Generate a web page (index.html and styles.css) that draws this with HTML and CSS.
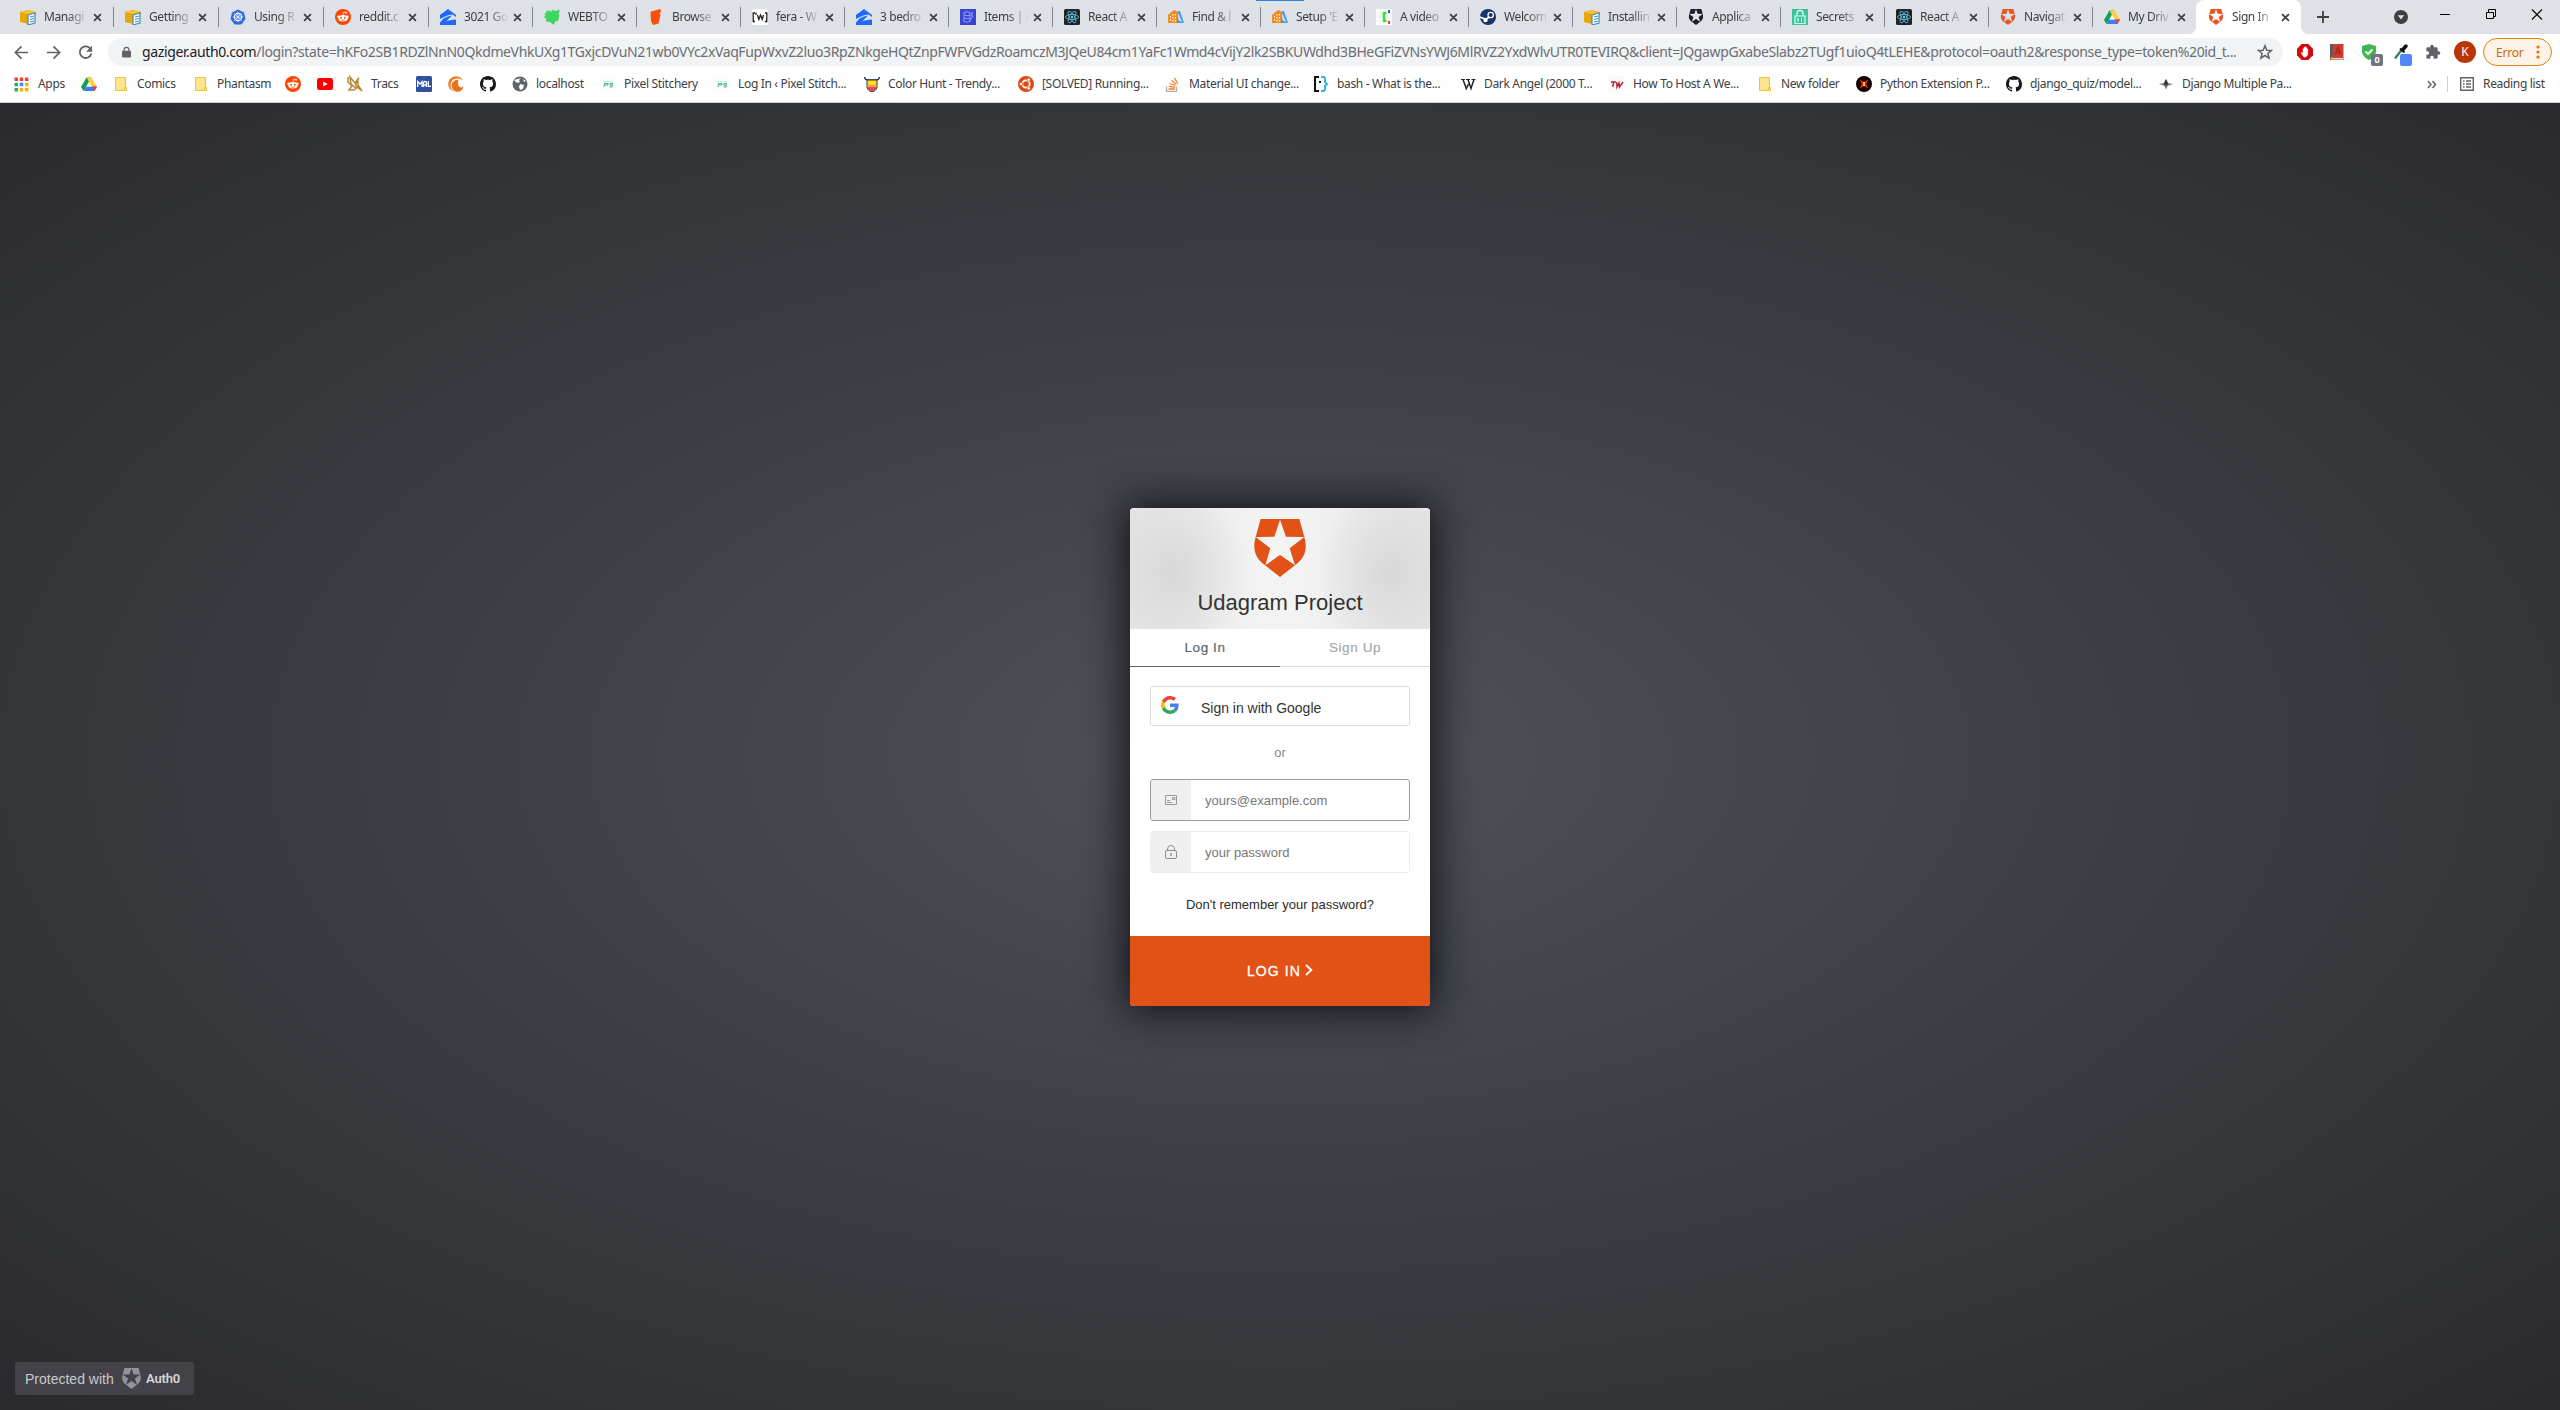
FILE: index.html
```html
<!DOCTYPE html>
<html lang="en">
<head>
<meta charset="utf-8">
<title>Sign In with Auth0</title>
<link rel="stylesheet" href="styles.css">
</head>
<body>
<svg class="defs" aria-hidden="true">
  <symbol id="x" viewBox="0 0 10 10"><path d="M1.2 1.2l7.6 7.6M8.8 1.2L1.2 8.8" stroke="#3c4043" stroke-width="1.9"/></symbol>
  <symbol id="aws" viewBox="0 0 16 16"><path d="M0 3l8-2 8 2v3H8v9L0 13z" fill="#e8a80c"/><path d="M0 3l8-2 7 2-7 2z" fill="#f6c531"/><path d="M8 6l7-2v10l-7 2z" fill="#fff" stroke="#3b8fc4" stroke-width="1.2"/><path d="M10 8l4-1M10 10.500l4-1M10 13l4-1" stroke="#3b8fc4"/></symbol>
  <symbol id="kube" viewBox="0 0 16 16"><path d="M8 .5l6 3 1.500 6.500-4 5.500h-7L.5 10 2 3.500z" fill="#326ce5"/><circle cx="8" cy="8" r="3.600" fill="none" stroke="#fff" stroke-width="1.200"/><path d="M8 2.800v10.400M2.800 8h10.400M4.300 4.300l7.400 7.400M11.700 4.300l-7.400 7.400" stroke="#fff" stroke-width=".7"/></symbol>
  <symbol id="reddit" viewBox="0 0 16 16"><circle cx="8" cy="8" r="8" fill="#ff4500"/><ellipse cx="8" cy="9.300" rx="4.700" ry="3.300" fill="#fff"/><circle cx="3.500" cy="7.800" r="1.200" fill="#fff"/><circle cx="12.500" cy="7.800" r="1.200" fill="#fff"/><circle cx="11" cy="3.800" r="1" fill="#fff"/><path d="M8 6l.7-3 2.300.7M6 10.700q2 1.300 4 0" fill="none" stroke="#fff" stroke-width=".7"/><circle cx="6.200" cy="8.700" r=".9" fill="#ff4500"/><circle cx="9.800" cy="8.700" r=".9" fill="#ff4500"/><path d="M6 10.700q2 1.200 4 0" fill="none" stroke="#ff4500" stroke-width=".7"/></symbol>
  <symbol id="zillow" viewBox="0 0 16 16"><path d="M8 0l8 6v2L12.500 5.500Q8 5.500 3 8.500L0 10V6z" fill="#1f69ff"/><path d="M3.500 9.500Q8 6.800 12 6.500L6.500 12q5-1.500 9.500-1.500V16H0v-2.500z" fill="#1f69ff"/></symbol>
  <symbol id="webtoon" viewBox="0 0 16 16"><path d="M2 2l4-.5L7 3l2-2.500L10.500 2 16 1l-1.500 4 1 1L14 12l-3 .5L10 16l-4-3-4-.5.5-3L0 8.500 1.500 6 0 4.500l2.500-.3z" fill="#3ed65c"/></symbol>
  <symbol id="tapas" viewBox="0 0 16 16"><path d="M3 2.500L12.500 0l.5 3-1.500 1 1 2-2 8.500L5 16 3 12l-.5-8z" fill="#fa5109"/></symbol>
  <symbol id="fera" viewBox="0 0 16 16"><rect width="16" height="16" rx="2" fill="#fff"/><path d="M3 4H1.200v8.500H3M13 4h1.800v8.500H13M4 3.500V6M5.500 6l1.300 4.500L8.500 6l1.700 4.500L11.500 6" fill="none" stroke="#222" stroke-width="1.300"/></symbol>
  <symbol id="dynamo" viewBox="0 0 16 16"><path d="M0 0h16v16H0z" fill="#3a45d2"/><path d="M4 3.500q3-1.500 6 0v9q-3 1.500-6 0zM4 6q3 1.500 6 0M4 9q3 1.500 6 0M11 4.500l1.500-1L11.500 7H13l-3 4.500" fill="none" stroke="#a8b4ff" stroke-width=".8"/></symbol>
  <symbol id="react" viewBox="0 0 16 16"><rect width="16" height="16" rx="1.500" fill="#20232a"/><g fill="none" stroke="#61c5df" stroke-width=".8"><ellipse cx="8" cy="8" rx="6.500" ry="2.500"/><ellipse cx="8" cy="8" rx="6.500" ry="2.500" transform="rotate(60 8 8)"/><ellipse cx="8" cy="8" rx="6.500" ry="2.500" transform="rotate(120 8 8)"/></g><circle cx="8" cy="8" r="1.300" fill="#61c5df"/></symbol>
  <symbol id="expo" viewBox="0 0 16 16"><path d="M0 6l6-5 3 1.500V14H0z" fill="#f58a1f"/><path d="M9 2.500l3-.5 4 12H9z" fill="#4b9ce2"/><path d="M9.500 3L14 13l-3.500-2z" fill="#d7ebfb"/><path d="M2.500 7v6M5 5v8M7.500 5v8" stroke="#fff" stroke-width="1.200" stroke-dasharray="1.500 1.500"/></symbol>
  <symbol id="vid" viewBox="0 0 16 16"><path d="M0 0h16v16H0z" fill="#fff"/><path d="M0 4h16M0 8h16M0 12h16M4 0v16" stroke="#ddd" stroke-width=".5"/><path d="M10.500 4H8v8h2.500" fill="none" stroke="#35e33b" stroke-width="2.600"/><path d="M12 1h2v3h-2z" fill="#3650ee"/><path d="M12 12h2v3h-2z" fill="#ed3b32"/></symbol>
  <symbol id="steam" viewBox="0 0 16 16"><circle cx="8" cy="8" r="8" fill="#143565"/><path d="M0 8l6 2.500L9 8" fill="none" stroke="#fff" stroke-width="1.700"/><circle cx="10.700" cy="6" r="2.700" fill="#143565" stroke="#fff" stroke-width="1.300"/><circle cx="5.500" cy="11" r="2.200" fill="#fff"/></symbol>
  <symbol id="auth" viewBox="0 0 156 174"><path fill="currentColor" fill-rule="evenodd" d="M20 0H136L151 54C163 95 148 121 123 139L78 174L33 139C8 121 -7 95 5 54ZM78 2L61 53L5 54L49 88L34 139L78 108L123 139L107 88L151 54L96 53Z"/></symbol>
  <symbol id="secret" viewBox="0 0 16 16"><path d="M0 0h16v16H0z" fill="#3ec49c"/><path d="M5 7V4.500q0-3 3-3t3 3V7" fill="none" stroke="#d8fff2" stroke-width="1.300"/><path d="M3 7h10v7.500H3z" fill="none" stroke="#d8fff2" stroke-width="1.200"/><path d="M6 9v4M9.500 9v4M5 10h2" stroke="#d8fff2"/></symbol>
  <symbol id="drive" viewBox="0 0 16 16"><path d="M5.500 1.500h5L5 11l-2.500 4L0 11z" fill="#0f9d58"/><path d="M5.500 1.500h5L16 11h-5z" fill="#ffcf3f"/><path d="M5 10.500h11L13.500 15h-11z" fill="#3c7df0"/><path d="M11 10.500h5L13.500 15z" fill="#e84335"/><path d="M8 6l2.700 4.500H5.300z" fill="#fff"/></symbol>
  <symbol id="folder" viewBox="0 0 16 16"><path d="M2.500 1.500h10v10h1v3h-11z" fill="#fce58a" stroke="#e8c635"/><path d="M11.500 14v-2.500h2" fill="none" stroke="#e8c635"/></symbol>
  <symbol id="github" viewBox="0 0 16 16"><path fill="#191717" d="M8 0C3.580 0 0 3.580 0 8c0 3.540 2.290 6.530 5.470 7.590.4.070.550-.170.550-.380 0-.190-.010-.820-.010-1.490-2.010.370-2.530-.490-2.690-.940-.090-.230-.480-.940-.820-1.130-.280-.150-.680-.520-.010-.530.630-.010 1.080.580 1.230.820.720 1.210 1.870.870 2.330.660.070-.520.280-.870.510-1.070-1.780-.2-3.640-.890-3.640-3.950 0-.870.310-1.590.820-2.150-.080-.2-.360-1.020.080-2.120 0 0 .670-.210 2.200.820.640-.180 1.320-.270 2-.270s1.360.090 2 .270c1.530-1.040 2.200-.820 2.200-.820.440 1.100.160 1.920.080 2.120.510.560.820 1.270.820 2.150 0 3.070-1.870 3.750-3.650 3.950.290.250.540.730.540 1.480 0 1.070-.010 1.930-.010 2.200 0 .210.150.460.550.380A8.010 8.010 0 0 0 16 8c0-4.420-3.580-8-8-8z"/></symbol>
  <symbol id="ps" viewBox="0 0 16 16"><path d="M0 0h16v16H0z" fill="#fcfefd"/><path d="M4 11l.7-3.500H8L7.500 9H5M13 7.500h-2.500L10 9h2.500l-.5 2H9.500" fill="none" stroke="#4bb98f" stroke-width="1.200"/><path d="M3 5.500h10" stroke="#c9efd2" stroke-width="1"/></symbol>
</svg>

<div class="browser">
  <div class="tabstrip">
    <span class="progress"></span>
    <div class="tab w"><svg class="fav"><use href="#aws"/></svg><span>Managi</span><svg class="close"><use href="#x"/></svg></div>
    <div class="tab w"><svg class="fav"><use href="#aws"/></svg><span>Getting</span><svg class="close"><use href="#x"/></svg></div>
    <div class="tab w"><svg class="fav"><use href="#kube"/></svg><span>Using R</span><svg class="close"><use href="#x"/></svg></div>
    <div class="tab w"><svg class="fav"><use href="#reddit"/></svg><span>reddit.c</span><svg class="close"><use href="#x"/></svg></div>
    <div class="tab"><svg class="fav"><use href="#zillow"/></svg><span>3021 Go</span><svg class="close"><use href="#x"/></svg></div>
    <div class="tab"><svg class="fav"><use href="#webtoon"/></svg><span>WEBTO</span><svg class="close"><use href="#x"/></svg></div>
    <div class="tab"><svg class="fav"><use href="#tapas"/></svg><span>Browse</span><svg class="close"><use href="#x"/></svg></div>
    <div class="tab"><svg class="fav"><use href="#fera"/></svg><span>fera - W</span><svg class="close"><use href="#x"/></svg></div>
    <div class="tab"><svg class="fav"><use href="#zillow"/></svg><span>3 bedro</span><svg class="close"><use href="#x"/></svg></div>
    <div class="tab"><svg class="fav"><use href="#dynamo"/></svg><span>Items | A</span><svg class="close"><use href="#x"/></svg></div>
    <div class="tab"><svg class="fav"><use href="#react"/></svg><span>React A</span><svg class="close"><use href="#x"/></svg></div>
    <div class="tab"><svg class="fav"><use href="#expo"/></svg><span>Find &amp; l</span><svg class="close"><use href="#x"/></svg></div>
    <div class="tab"><svg class="fav"><use href="#expo"/></svg><span>Setup 'E</span><svg class="close"><use href="#x"/></svg></div>
    <div class="tab"><svg class="fav"><use href="#vid"/></svg><span>A video</span><svg class="close"><use href="#x"/></svg></div>
    <div class="tab"><svg class="fav"><use href="#steam"/></svg><span>Welcom</span><svg class="close"><use href="#x"/></svg></div>
    <div class="tab"><svg class="fav"><use href="#aws"/></svg><span>Installin</span><svg class="close"><use href="#x"/></svg></div>
    <div class="tab"><svg class="fav dark"><use href="#auth"/></svg><span>Applica</span><svg class="close"><use href="#x"/></svg></div>
    <div class="tab"><svg class="fav"><use href="#secret"/></svg><span>Secrets</span><svg class="close"><use href="#x"/></svg></div>
    <div class="tab"><svg class="fav"><use href="#react"/></svg><span>React A</span><svg class="close"><use href="#x"/></svg></div>
    <div class="tab"><svg class="fav orange"><use href="#auth"/></svg><span>Navigat</span><svg class="close"><use href="#x"/></svg></div>
    <div class="tab last"><svg class="fav"><use href="#drive"/></svg><span>My Driv</span><svg class="close"><use href="#x"/></svg></div>
    <div class="tab active"><svg class="fav orange"><use href="#auth"/></svg><span>Sign In</span><svg class="close"><use href="#x"/></svg></div>
    <svg class="plus" viewBox="0 0 12 12"><path d="M6 0v12M0 6h12" stroke="#3c4043" stroke-width="1.800"/></svg>
    <div class="winctl">
      <svg width="14" height="14" viewBox="0 0 14 14"><circle cx="7" cy="7" r="7" fill="#3c4043"/><path d="M3.800 5.200h6.400L7 9.500z" fill="#dee1e6"/></svg>
      <svg width="10" height="14" viewBox="0 0 10 14"><path d="M0 4.500h10" stroke="#000"/></svg>
      <svg width="10" height="14" viewBox="0 0 10 14"><path d="M.5 2.500h7v6h-7zM2.500 2.500v-3h7v7h-2" fill="none" stroke="#000"/></svg>
      <svg width="10" height="14" viewBox="0 0 10 14"><path d="M0 -.5l10 10M10 -.5l-10 10" stroke="#000" stroke-width="1.100"/></svg>
    </div>
  </div>

  <div class="toolbar">
    <svg class="nav" viewBox="0 0 16 16"><path d="M15 8H2M8 1.500L1.500 8 8 14.500" fill="none" stroke="#5f6368" stroke-width="1.800"/></svg>
    <svg class="nav" viewBox="0 0 16 16"><path d="M1 8h13M8 1.500L14.500 8 8 14.500" fill="none" stroke="#5f6368" stroke-width="1.800"/></svg>
    <svg class="nav" viewBox="0 0 16 16"><path d="M13.500 4.500A6.200 6.200 0 1 0 14.200 9" fill="none" stroke="#5f6368" stroke-width="1.900"/><path d="M15 .8v6.400H8.600z" fill="#5f6368"/></svg>
    <div class="omnibox">
      <svg width="9" height="12" viewBox="0 0 10 12"><path d="M1 4.500h8q1 0 1 1V11q0 1-1 1H1q-1 0-1-1V5.500q0-1 1-1z" fill="#5f6368"/><path d="M2.300 5V3.500a2.700 2.700 0 0 1 5.400 0V5" fill="none" stroke="#5f6368" stroke-width="1.300"/></svg>
      <p class="url"><b>gaziger.auth0.com</b>/login?state=hKFo2SB1RDZlNnN0QkdmeVhkUXg1TGxjcDVuN21wb0VYc2xVaqFupWxvZ2luo3RpZNkgeHQtZnpFWFVGdzRoamczM3JQeU84cm1YaFc1Wmd4cVijY2lk2SBKUWdhd3BHeGFiZVNsYWJ6MlRVZ2YxdWlvUTR0TEVIRQ&amp;client=JQgawpGxabeSlabz2TUgf1uioQ4tLEHE&amp;protocol=oauth2&amp;response_type=token%20id_t...</p>
      <svg class="star" width="16" height="16" viewBox="0 0 16 16"><path d="M8 1.800l1.800 4.400 4.700.3-3.600 3 1.200 4.600L8 11.500l-4.100 2.600 1.200-4.600-3.600-3 4.700-.3z" fill="none" stroke="#5f6368" stroke-width="1.500"/></svg>
    </div>
    <div class="exts">
      <svg width="16" height="16" viewBox="0 0 16 16"><path d="M4.700 0h6.600L16 4.700v6.600L11.300 16H4.700L0 11.300V4.700z" fill="#d9050a"/><path d="M4.800 8l1 1V4.500h1V3h1.200v-.5h1V3.500h1.200V5h.9v5q-.5 3-3 3.500-2 0-2.800-2.500L4 9z" fill="#fff"/></svg>
      <svg width="16" height="16" viewBox="0 0 16 16"><path d="M1 0h13.500v16H1z" fill="#d13b30"/><path d="M1 0h3v14H1z" fill="#69525a"/><path d="M6 11l3-8 3 8M7 8.500h4" fill="none" stroke="#a92a22" stroke-width="1.500"/><path d="M2 14h12v1.500H3z" fill="#ddd"/><circle cx="3" cy="14.500" r="1.300" fill="#f2c31b"/></svg>
      <span class="shield"><svg width="16" height="16" viewBox="0 0 16 16"><path d="M8 0l7 2v6q-1 5-7 8Q2 13 1 8V2z" fill="#3fb650"/><path d="M4.500 7.500L7 10l4.500-4.500" fill="none" stroke="#fff" stroke-width="1.800"/></svg><i>0</i></span>
      <span class="picker"><svg width="16" height="16" viewBox="0 0 16 16"><path d="M2 14.500L8.500 6" stroke="#3d7a4c" stroke-width="2.200"/><path d="M7 4.500l4.500 4" stroke="#111" stroke-width="2"/><path d="M9.500 6l3.500-4" stroke="#111" stroke-width="3.500" stroke-linecap="round"/></svg><i></i></span>
      <svg width="16" height="16" viewBox="0 0 24 24"><path fill="#5f6368" d="M20.500 11H19V7c0-1.100-.9-2-2-2h-4V3.500a2.500 2.500 0 0 0-5 0V5H4c-1.100 0-2 .9-2 2v3.800h1.500a2.700 2.700 0 0 1 0 5.400H2V20c0 1.100.9 2 2 2h3.800v-1.500a2.700 2.700 0 0 1 5.400 0V22H17c1.100 0 2-.9 2-2v-4h1.500a2.500 2.500 0 0 0 0-5z"/></svg>
    </div>
    <span class="avatar">K</span>
    <span class="error">Error<svg width="4" height="14" viewBox="0 0 4 14"><g fill="#e37400"><circle cx="2" cy="2" r="1.600"/><circle cx="2" cy="7" r="1.600"/><circle cx="2" cy="12" r="1.600"/></g></svg></span>
  </div>

  <div class="bookmarks">
    <a><svg viewBox="0 0 16 16"><g fill="#ea4335"><path d="M1.500 1.500h3.500v3.500H1.500zM6.700 1.500h3.500v3.500H6.700zM11.900 1.500h3.500v3.500h-3.500z"/></g><path d="M1.500 6.700h3.500v3.500H1.500zM1.500 11.900h3.500v3.500H1.500z" fill="#34a853"/><path d="M6.700 6.700h3.500v3.500H6.700z" fill="#4285f4"/><path d="M11.900 6.700h3.500v3.500h-3.500zM6.700 11.900h3.500v3.500H6.700zM11.900 11.900h3.500v3.500h-3.500z" fill="#fbaf05"/></svg>Apps</a>
    <a><svg><use href="#drive"/></svg></a>
    <a><svg><use href="#folder"/></svg>Comics</a>
    <a><svg><use href="#folder"/></svg>Phantasm</a>
    <a><svg><use href="#reddit"/></svg></a>
    <a><svg viewBox="0 0 16 16"><rect y="2" width="16" height="12" rx="2.500" fill="#f00"/><path d="M6.200 5.500v5L10.700 8z" fill="#fff"/></svg></a>
    <a><svg viewBox="0 0 16 16"><path d="M1 1v5l4 4-3 4h5l3-3 5 4-4-6V3L8 7 3 1l1 7 6 5M12 2L8.500 9l6 5" stroke="#b98a3a" stroke-width="1.500" fill="none"/></svg>Tracs</a>
    <a><svg viewBox="0 0 16 16"><rect width="16" height="16" rx="1.500" fill="#2e51a2"/><path d="M1.700 11V5.500L4 8l2-2.500V11M7.500 11V7q0-1.500 1.500-1.500T10.500 7v4M7.500 9h3M12.300 5v5.300H15" fill="none" stroke="#fff" stroke-width="1.300"/></svg></a>
    <a><svg viewBox="0 0 16 16"><path d="M15 4.500A7.800 7.800 0 1 0 7 15.800 7 7 0 0 1 2.500 9Q3 3 9 2.600q4 0 6 1.900z" fill="#f47b20"/><path d="M10.500 3.800a6 6 0 1 0 5 6.500q-2 2-4 .5-2.500-2.500-1-7z" fill="#e8731b"/></svg></a>
    <a><svg><use href="#github"/></svg></a>
    <a><svg viewBox="0 0 16 16"><circle cx="8" cy="8" r="7.500" fill="#5f6368"/><path d="M2 4l3 3 3-1-1-2 2-2M8 8l4 1-1 4-3 1-1-3zM11 3l3 2-2 1z" fill="#fff"/></svg>localhost</a>
    <a><svg><use href="#ps"/></svg>Pixel Stitchery</a>
    <a><svg><use href="#ps"/></svg>Log In ‹ Pixel Stitch...</a>
    <a><svg viewBox="0 0 16 16"><path d="M.5 1q.5 3 3 3h9q2.500 0 3-3" fill="none" stroke="#26324e" stroke-width="1.400"/><path d="M3 4h10v7q-1 4.500-5 4.500T3 11z" fill="#ffe21e" stroke="#26324e"/><path d="M3.500 9h9v2H3.500z" fill="#ffa13c"/><path d="M3.700 11h8.600Q12 15 8 15t-4.300-4z" fill="#e8416f"/></svg>Color Hunt - Trendy...</a>
    <a><svg viewBox="0 0 16 16"><circle cx="8" cy="8" r="8" fill="#dd4814"/><circle cx="8" cy="8" r="3.700" fill="none" stroke="#fff" stroke-width="1.800"/><g fill="#fff" stroke="#dd4814" stroke-width=".7"><circle cx="3" cy="8" r="1.700"/><circle cx="10.700" cy="3.600" r="1.700"/><circle cx="10.700" cy="12.400" r="1.700"/></g></svg>[SOLVED] Running...</a>
    <a><svg viewBox="0 0 16 16"><path d="M1.500 10.500v4.800h10v-4.800" fill="none" stroke="#a9adb0" stroke-width="1.300"/><path d="M3.500 13h6.500M3.700 10.400l6.400.9M4.500 7.500l6 2M6.500 4.600l5 3.900M9.500 2l3.300 5.500" stroke="#f48024" stroke-width="1.300"/></svg>Material UI change...</a>
    <a><svg viewBox="0 0 16 16"><path d="M6 1H2v14h4" fill="none" stroke="#111" stroke-width="2"/><path d="M8 1h2q2 0 2 2v3l2 2-2 2v3q0 2-2 2H8" fill="none" stroke="#35b2e8" stroke-width="2"/><path d="M6 5h2v2H6z" fill="#111"/></svg>bash - What is the...</a>
    <a><svg viewBox="0 0 16 16"><path d="M1 3.500h4M6 3.500h4M11.500 3.500h4" stroke="#222" stroke-width="1"/><path d="M3 3.500l3.300 9L8.500 8M8 3.500l3 9 3-9" fill="none" stroke="#222" stroke-width="1.500"/></svg>Dark Angel (2000 T...</a>
    <a><svg viewBox="0 0 16 16"><path d="M0 0h16v16H0z" fill="#fafafa"/><path d="M2 6h5M4.700 6L3.700 11M7.700 6l.3 5 2-4 .5 4L14 6" fill="none" stroke="#b3202a" stroke-width="1.400"/></svg>How To Host A We...</a>
    <a><svg><use href="#folder"/></svg>New folder</a>
    <a><svg viewBox="0 0 16 16"><circle cx="8" cy="8" r="8" fill="#170303"/><path d="M3.500 3.500L8 6l4.500-2.500L10 8l2.500 4.500L8 10l-4.500 2.500L6 8z" fill="#f32d10"/><path d="M7 6h2v4H7z" fill="#ffc83d"/></svg>Python Extension P...</a>
    <a><svg><use href="#github"/></svg>django_quiz/model...</a>
    <a><svg viewBox="0 0 16 16"><path d="M8 3l2 3.800 5 1.400-5 1.500L8 13.500 6 9.700 1 8.200l5-1.400z" fill="#888"/><path d="M8 3l2.200 5L8 10 5.800 8z" fill="#333"/></svg>Django Multiple Pa...</a>
    <span class="more"><svg width="10" height="9" viewBox="0 0 10 9"><path d="M1 1l3 3.500-3 3.500M5.500 1l3 3.500-3 3.500" fill="none" stroke="#5f6368" stroke-width="1.500"/></svg></span>
    <a class="reading"><svg viewBox="0 0 16 16"><path d="M1.700 1.700h12.600v12.600H1.700z" fill="none" stroke="#5f6368" stroke-width="1.400"/><path d="M4 5h1.500M4 8h1.500M4 11h1.500M7 5h5M7 8h5M7 11h5" stroke="#5f6368" stroke-width="1.400"/></svg>Reading list</a>
  </div>
</div>

<main class="page">
  <section class="card">
    <header class="head">
      <svg class="logo"><use href="#auth"/></svg>
      <h1>Udagram Project</h1>
    </header>
    <nav class="modes"><a class="on">Log In</a><a>Sign Up</a></nav>
    <div class="form">
      <div class="google"><svg width="18" height="18" viewBox="0 0 48 48"><path fill="#ea4335" d="M24 9.500c3.540 0 6.710 1.220 9.210 3.600l6.850-6.850C35.900 2.380 30.470 0 24 0 14.620 0 6.510 5.380 2.560 13.220l7.980 6.190C12.430 13.720 17.740 9.500 24 9.500z"/><path fill="#4285f4" d="M46.980 24.550c0-1.570-.150-3.090-.380-4.550H24v9.020h12.940c-.580 2.960-2.260 5.480-4.780 7.180l7.730 6c4.510-4.180 7.090-10.360 7.090-17.650z"/><path fill="#fbbc05" d="M10.530 28.590c-.480-1.450-.760-2.990-.760-4.590s.270-3.140.760-4.590l-7.980-6.190C.920 16.460 0 20.120 0 24c0 3.880.920 7.540 2.560 10.780l7.970-6.190z"/><path fill="#34a853" d="M24 48c6.480 0 11.930-2.130 15.890-5.810l-7.730-6c-2.150 1.450-4.920 2.300-8.160 2.300-6.260 0-11.570-4.220-13.470-9.910l-7.980 6.190C6.510 42.620 14.620 48 24 48z"/></svg><span>Sign in with Google</span></div>
      <p class="or">or</p>
      <div class="field focus"><i><svg width="12" height="10" viewBox="0 0 12 10"><path d="M.5.500h11v9H.5z" fill="none" stroke="#999"/><path d="M2 5.500h3M2 7.500h5M7.500 2.500h2.500v2H7.500z" stroke="#999" fill="none"/></svg></i><span>yours@example.com</span></div>
      <div class="field"><i><svg width="12" height="14" viewBox="0 0 12 14"><rect x=".5" y="5.500" width="11" height="8" rx="1.500" fill="none" stroke="#8e8e8e"/><path d="M2.500 5.500V4q0-3.500 3.500-3.500T9.500 4v1.500" fill="none" stroke="#8e8e8e"/><path d="M6 8v3" stroke="#999" stroke-width="1.500"/></svg></i><span>your password</span></div>
      <p class="forgot">Don't remember your password?</p>
    </div>
    <div class="submit">LOG IN<svg width="8" height="12" viewBox="0 0 8 12"><path d="M1 1l5.300 5L1 11" fill="none" stroke="#fff" stroke-width="1.900"/></svg></div>
  </section>
  <div class="badge"><span>Protected with</span><svg><use href="#auth"/></svg><b>Auth0</b></div>
</main>
</body>
</html>
```
FILE: styles.css
```css
* { box-sizing: border-box; }
body { margin: 0; width: 2560px; height: 1410px; display: flex; flex-direction: column; overflow: hidden; font-family: "Noto Sans", "Open Sans", sans-serif; }
p, h1 { margin: 0; font-weight: 400; }
svg { display: block; flex: none; overflow: visible; }
.defs { position: absolute; width: 0; height: 0; }

.browser { height: 103px; background: #fff; border-bottom: 1px solid #cfd1d4; color: #3c4043; font-size: 12px; }

.tabstrip { position: relative; height: 34px; padding-left: 9px; display: flex; background: #dee1e6; }
.progress { position: absolute; left: 1256px; top: 0; width: 48px; height: 1px; background: #2b84d8; }
.tab { position: relative; width: 104px; height: 34px; padding-left: 11px; display: flex; align-items: center; }
.tab.w { width: 105px; }
.tab::after { content: ""; position: absolute; right: 0; top: 7px; width: 1px; height: 20px; background: #808387; }
.tab.last::after, .tab.active::after { display: none; }
.tab span { width: 46px; margin-left: 8px; white-space: nowrap; letter-spacing: -0.4px; line-height: 18px; mask-image: linear-gradient(90deg, #000 50%, transparent 98%); }
.fav { width: 16px; height: 16px; }
.close { width: 9px; height: 9px; margin-left: 3px; }
.dark { color: #1b1f2b; }
.orange { color: #eb5424; }
.tab.active { background: #fff; border-radius: 8px 8px 0 0; width: 105px; margin-left: -1px; padding-left: 12px; }
.tab.active::before { content: ""; position: absolute; left: -8px; right: -8px; bottom: 0; height: 8px; background: radial-gradient(circle at 0 0, transparent 8px, #fff 8.500px) left / 8px 8px no-repeat, radial-gradient(circle at 100% 0, transparent 8px, #fff 8.500px) right / 8px 8px no-repeat; }
.plus { width: 12px; height: 12px; margin: 11px 0 0 16px; }
.winctl { margin: 10px 18px 0 auto; display: flex; }
.winctl svg + svg { margin-left: 36px; }
.winctl svg:nth-child(2) { margin-left: 32px; }

.toolbar { height: 36px; padding: 0 8px 0 14px; display: flex; align-items: center; }
.nav { width: 15px; height: 15px; margin-right: 17px; }
.omnibox { width: 2175px; height: 28px; margin-left: -2px; padding: 0 10px 0 14px; display: flex; align-items: center; border-radius: 14px; background: #f1f3f4; }
.url { width: 2106px; margin-left: 11px; white-space: nowrap; font-size: 14px; letter-spacing: -0.375px; line-height: 22px; color: #6a6e73; }
.url b { font-weight: 400; color: #202124; }
.star { margin-left: auto; }
.exts { display: flex; gap: 16px; margin-left: 14px; }
.shield, .picker { position: relative; }
.shield i { position: absolute; left: 10px; top: 10px; width: 12px; height: 12px; border-radius: 2px; background: #73737f; color: #fff; font: 700 9px/12px "Noto Sans", sans-serif; text-align: center; }
.picker i { position: absolute; left: 7px; top: 10px; width: 12px; height: 12px; border-radius: 2px; background: #5087fb; }
.avatar { width: 22px; height: 22px; margin-left: 13px; border-radius: 50%; background: #b93502; color: #fff; text-align: center; line-height: 22px; }
.error { width: 69px; height: 28px; margin-left: auto; padding: 0 11px 0 12px; display: flex; align-items: center; justify-content: space-between; border: 1px solid #dd8412; border-radius: 14px; background: #fdf3e8; color: #c96a06; letter-spacing: -0.2px; }

.bookmarks { height: 28px; padding: 0 14px 0 13px; display: grid; align-items: center; grid-template-columns: 68px 32px 80px 92px 32px 30px 69px 32px 32px 32px 88px 114px 150px 154px 147px 148px 147px 149px 148px 99px 150px 152px 1fr 20px 99px; }
.bookmarks a { display: flex; align-items: center; gap: 8px; line-height: 18px; white-space: nowrap; letter-spacing: -0.33px; }
.bookmarks svg { width: 16px; height: 16px; }
.bookmarks a:first-child { gap: 9px; }
.bookmarks .more svg { width: 10px; height: 9px; }
.bookmarks .reading { height: 16px; padding-left: 11px; border-left: 1px solid #cdd0d4; }

.page { position: relative; flex: 1; display: flex; justify-content: center; padding-top: 405px; font-family: "Liberation Sans", Arial, sans-serif; background: radial-gradient(#52525c 0%, #45454e 28%, #3c3d43 50%, #35363a 70%, #2f3034 86%, #2a292e 100%); }
.card { width: 300px; height: 498px; display: flex; flex-direction: column; border-radius: 4px; overflow: hidden; background: #fff; box-shadow: 0 0 40px 4px #111118; }
.head { height: 121px; padding-top: 11px; display: flex; flex-direction: column; align-items: center; background: radial-gradient(ellipse 75px 95px at 42px 65px, #d8d8d8, #d8d8d800), radial-gradient(ellipse 75px 95px at 262px 65px, #d8d8d8, #d8d8d800), linear-gradient(90deg, #e6e6e6, #f3f3f3 45%, #f3f3f3 55%, #e6e6e6); }
.logo { width: 52px; height: 58px; color: #e25115; }
.head h1 { margin-top: 13px; font-size: 22px; line-height: 26px; color: #333; }
.modes { height: 38px; display: flex; }
.modes a { flex: 1; border-bottom: 1px solid #dadada; text-align: center; line-height: 38px; font-size: 13.500px; letter-spacing: 0.6px; color: #a5a8ac; -webkit-text-stroke: 0.2px; }
.modes .on { border-color: #5c666f; color: #5c666f; }
.form { height: 269px; padding: 19px 20px 0; font-size: 13px; }
.google { height: 40px; padding-left: 10px; display: flex; align-items: center; border: 1px solid #dcdcdc; border-radius: 3px; color: #333; font-size: 14px; }
.google svg { margin-top: -3px; }
.google span { margin: 3px 0 0 22px; letter-spacing: -0.02px; }
.or { margin-top: 19px; height: 16px; line-height: 16px; text-align: center; color: #888; }
.field { height: 42px; margin-top: 10px; display: flex; align-items: center; border: 1px solid #eee; border-radius: 3px; overflow: hidden; color: #777; }
.field.focus { margin-top: 18px; border-color: #9a9a9a; }
.field i { width: 40px; height: 40px; padding-bottom: 1px; display: flex; align-items: center; justify-content: center; background: #f0f0f0; }
.field span { margin-left: 14px; }
.forgot { margin-top: 24px; line-height: 16px; text-align: center; font-size: 13px; color: #2b2b2b; white-space: nowrap; }
.submit { height: 70px; display: flex; align-items: center; justify-content: center; gap: 4px; background: #e25115; color: #fff; font-size: 14px; letter-spacing: 1.100px; -webkit-text-stroke: 0.3px; }
.submit svg { margin-top: -2px; }
.badge { position: absolute; left: 15px; bottom: 15px; width: 179px; height: 33px; padding-left: 10px; display: flex; align-items: center; border-radius: 3px; background: #434248; color: #c9c9cc; font-size: 14px; }
.badge span { width: 89px; white-space: nowrap; letter-spacing: 0; }
.badge svg { width: 19px; height: 21px; margin: 0 5px 0 8px; color: #929298; }
.badge b { font: 600 13px "Roboto", sans-serif; letter-spacing: -0.2px; color: #d6d6d8; }
```
